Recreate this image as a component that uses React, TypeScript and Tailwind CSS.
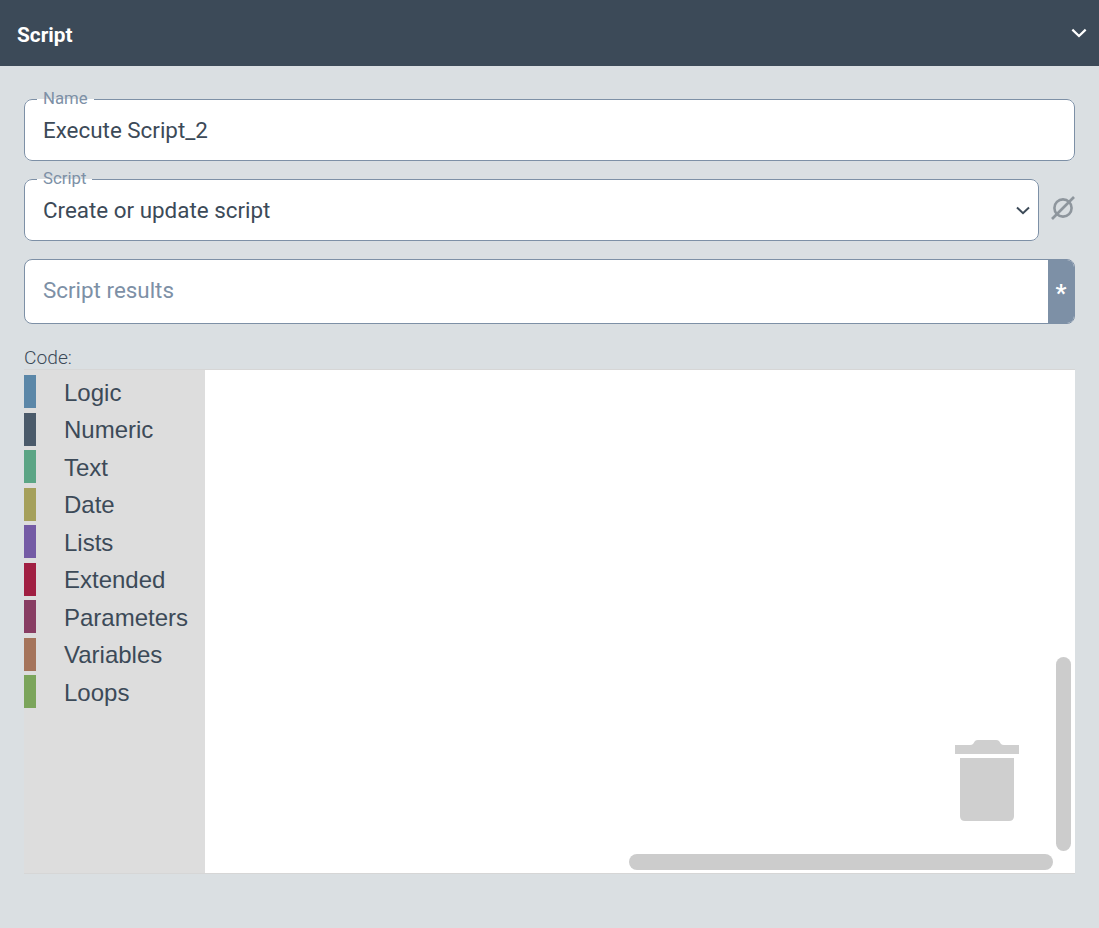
const cats: { label: string; color: string }[] = [
  { label: "Logic", color: "bg-[#5b87a8]" },
  { label: "Numeric", color: "bg-[#4a5a6a]" },
  { label: "Text", color: "bg-[#5ba585]" },
  { label: "Date", color: "bg-[#a5a05b]" },
  { label: "Lists", color: "bg-[#745ba5]" },
  { label: "Extended", color: "bg-[#a01f42]" },
  { label: "Parameters", color: "bg-[#883d63]" },
  { label: "Variables", color: "bg-[#a5745b]" },
  { label: "Loops", color: "bg-[#7ba55b]" },
];

function Chevron({ className }: { className: string }) {
  return (
    <svg viewBox="0 0 14 9" className={className} fill="none" stroke="currentColor" strokeWidth="2">
      <path d="M1 1.5 7 7.2 13 1.5" />
    </svg>
  );
}

function Field({ label, value, children }: { label: string; value: string; children?: React.ReactNode }) {
  return (
    <fieldset className="h-[70px] min-w-0 w-full rounded-[8px] border border-[#7d90a6] bg-white pl-[18px] pr-[8px]">
      <legend className="-ml-[6px] h-[16px] px-[6px] text-[16.8px] leading-[14px] text-[#7d90a6]">{label}</legend>
      <div className="flex h-[48px] items-center justify-between text-[22.4px] text-[#3c4a58]">
        <span>{value}</span>
        {children}
      </div>
    </fieldset>
  );
}

export default function App() {
  return (
    <div className="min-h-[928px] bg-[#dadfe2] font-['Roboto',sans-serif]">
      <header className="flex h-[66px] items-center justify-between bg-[#3c4a58] pl-[17px] pr-[12px] text-white">
        <h1 className="pt-[6px] text-[20.8px] font-bold">Script</h1>
        <Chevron className="h-[10px] w-[16px]" />
      </header>
      <main className="flex flex-col px-[24px] pt-[25px]">
        <Field label="Name" value="Execute Script_2" />
        <div className="mt-[10px] flex items-center gap-[12px]">
          <Field label="Script" value="Create or update script">
            <Chevron className="mb-[1px] h-[9px] w-[14px] text-[#3c4a58]" />
          </Field>
          <svg viewBox="0 0 24 24" className="mt-[3px] h-[24px] w-[24px] shrink-0 text-[#8e969d]" fill="none" stroke="currentColor" strokeWidth="2.6">
            <circle cx="12" cy="12" r="8.6" />
            <path d="M1 23 23 1" />
          </svg>
        </div>
        <div className="mt-[18px] flex h-[65px] overflow-hidden rounded-[8px] border border-[#7d90a6] bg-white">
          <div className="flex flex-1 items-center pb-[2px] pl-[18px] text-[22.4px] text-[#7d90a6]">Script results</div>
          <div className="flex w-[26px] items-center justify-center bg-[#7d90a6] pt-[2px] text-[24px] font-bold leading-none text-white">*</div>
        </div>
        <label className="mt-[23px] h-[22px] text-[19.2px] font-light leading-[22px] text-[#3c4a58]">Code:</label>
        <div className="relative flex h-[505px] border-t border-b border-[#d6d6d6] bg-white font-['Liberation_Sans',sans-serif]">
          <nav className="flex w-[181px] flex-col gap-[4.5px] bg-[#dddddd] pt-[5px]">
            {cats.map((c) => (
              <div key={c.label} className="flex h-[33px] items-center">
                <span className={`h-full w-[12px] ${c.color}`} />
                <span className="ml-[28px] pt-[2px] text-[24px] text-[#3c4a58]">{c.label}</span>
              </div>
            ))}
          </nav>
          <svg viewBox="0 0 64 82" className="absolute left-[931px] top-[370px] h-[82px] w-[64px] text-[#cfcfcf]" fill="currentColor">
            <path d="M0 5h15q2 0 3-1l2-3q1-1 3-1h18q2 0 3 1l2 3q1 1 3 1h15v9H0z" />
            <path d="M5 18h54v58q0 5-5 5H10q-5 0-5-5z" />
          </svg>
          <div className="absolute left-[1032px] top-[287px] h-[194px] w-[15px] rounded-full bg-[#cccccc]" />
          <div className="absolute left-[605px] top-[484px] h-[16px] w-[424px] rounded-full bg-[#cccccc]" />
        </div>
      </main>
    </div>
  );
}
